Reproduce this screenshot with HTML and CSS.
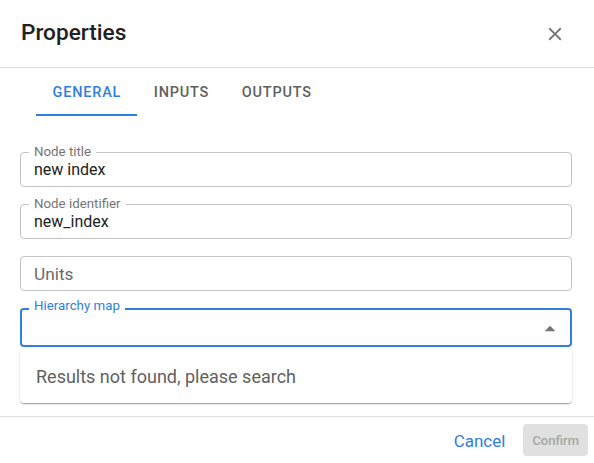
FILE: index.html
```html
<!DOCTYPE html>
<html lang="en">
<head>
<meta charset="utf-8">
<title>Properties</title>
<link rel="stylesheet" href="styles.css">
</head>
<body>
<div class="dialog">
  <header class="dialog-header">
    <h1 class="dialog-title">Properties</h1>
    <button class="icon-btn" aria-label="Close">
      <svg viewBox="0 0 24 24" width="22" height="22"><path fill="currentColor" d="M19 6.41 17.59 5 12 10.59 6.41 5 5 6.41 10.59 12 5 17.59 6.41 19 12 13.41 17.59 19 19 17.59 13.41 12z"/></svg>
    </button>
  </header>
  <nav class="tabs">
    <div class="tab tab-active">General</div>
    <div class="tab">Inputs</div>
    <div class="tab">Outputs</div>
  </nav>
  <main class="content">
    <div class="field">
      <span class="field-label">Node title</span>
      <span class="field-value">new index</span>
    </div>
    <div class="field">
      <span class="field-label">Node identifier</span>
      <span class="field-value">new_index</span>
    </div>
    <div class="field">
      <span class="field-placeholder">Units</span>
    </div>
    <div class="field-wrap">
      <div class="field field-focused">
        <span class="field-label">Hierarchy map</span>
        <svg class="dropdown-arrow" viewBox="0 0 24 24" width="26" height="26"><path fill="currentColor" d="m7 14 5-5 5 5z"/></svg>
      </div>
      <div class="popup">Results not found, please search</div>
    </div>
  </main>
  <footer class="dialog-footer">
    <button class="btn-text">Cancel</button>
    <button class="btn-disabled">Confirm</button>
  </footer>
</div>
</body>
</html>
```

FILE: styles.css
```css
* { box-sizing: border-box; }
html, body { margin: 0; padding: 0; background: #fff; }
body {
  font-family: Roboto, "Liberation Sans", Arial, sans-serif;
  color: #212121;
}
.dialog {
  width: 594px;
  height: 463px;
  display: flex;
  flex-direction: column;
}
.dialog-header {
  height: 68px;
  border-bottom: 1px solid #e0e0e0;
  display: flex;
  align-items: center;
  justify-content: space-between;
  padding: 0 28.5px 2px 21px;
}
.dialog-title {
  margin: 0;
  font-size: 22.6px;
  font-weight: 500;
  color: #212121;
}
.icon-btn {
  border: 0;
  background: none;
  padding: 0;
  color: #757575;
  display: flex;
  margin-top: 3px;
}
.tabs {
  height: 48px;
  display: flex;
  padding-left: 36px;
}
.tab {
  padding: 2px 16px 0 16.5px;
  font-size: 14.5px;
  font-weight: 500;
  letter-spacing: 0.8px;
  text-transform: uppercase;
  color: #5f5f5f;
  display: flex;
  align-items: center;
  border-bottom: 2px solid transparent;
}
.tab-active {
  color: #2f7fdb;
  border-bottom-color: #2f7fdb;
}
.content {
  flex: 1;
  padding: 36px 22px 0 20px;
  display: flex;
  flex-direction: column;
  gap: 17px;
}
.field {
  position: relative;
  height: 35px;
  border: 1px solid #c4c4c4;
  border-radius: 4px;
  display: flex;
  align-items: center;
  padding: 0 13px;
}
.field-label {
  position: absolute;
  left: 8px;
  top: -9px;
  padding: 0 5px;
  background: #fff;
  font-size: 13.3px;
  line-height: 15px;
  color: #757575;
}
.field-value {
  font-size: 16px;
  color: #212121;
}
.field-placeholder {
  font-size: 17.3px;
  color: #6b6b6b;
}
.field-wrap {
  display: flex;
  flex-direction: column;
  gap: 2px;
}
.field-focused {
  height: 39px;
  border: 2px solid #2f7fdb;
  justify-content: flex-end;
  padding-right: 7.5px;
}
.field-focused .field-label {
  color: #2f7fdb;
  top: -12px;
  left: 7px;
}
.dropdown-arrow {
  color: #757575;
  margin-top: 2px;
}
.popup {
  height: 54px;
  border-radius: 4px;
  background: #fff;
  box-shadow: 0 2px 1px -1px rgba(0,0,0,.2), 0 1px 1px 0 rgba(0,0,0,.14), 0 1px 3px 0 rgba(0,0,0,.12);
  display: flex;
  align-items: center;
  padding: 0 16px;
  font-size: 18px;
  color: #616161;
}
.dialog-footer {
  height: 47px;
  border-top: 1px solid #e0e0e0;
  display: flex;
  align-items: center;
  justify-content: flex-end;
  padding: 0 6px 0 0;
  gap: 10px;
}
.btn-text {
  border: 0;
  background: none;
  font-family: inherit;
  font-size: 17px;
  color: #2f7fdb;
  padding: 2px 8px 0;
  height: 32px;
}
.btn-disabled {
  border: 0;
  border-radius: 4px;
  background: #e0e0e0;
  color: #a6a6a6;
  font-family: inherit;
  font-size: 13px;
  font-weight: 500;
  height: 32px;
  padding: 0 9px;
}
```
